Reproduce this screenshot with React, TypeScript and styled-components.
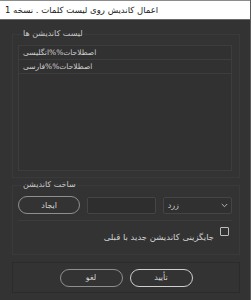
import styled, { createGlobalStyle } from "styled-components";

const GlobalStyle = createGlobalStyle`
  html, body {
    margin: 0;
    padding: 0;
    background: #333333;
  }
  body {
    font-family: "DejaVu Sans", "Noto Sans", sans-serif;
  }
`;

const App = () => {
  return (
    <Window>
      <GlobalStyle />
      <TitleBar>
        <TitleText dir="rtl">اعمال کاندیش روی لیست کلمات . نسخه 1</TitleText>
      </TitleBar>
      <Body>
        <Group>
          <Legend dir="rtl">لیست کاندیشن ها</Legend>
          <ListBox>
            <ListItem dir="rtl">اصطلاحات%%انگلیسی</ListItem>
            <ListItem dir="rtl">اصطلاحات%%فارسی</ListItem>
          </ListBox>
        </Group>

        <Group>
          <Legend dir="rtl">ساخت کاندیشن</Legend>
          <ControlsRow>
            <PillButton $tone="muted">ایجاد</PillButton>
            <TextField />
            <Combo>
              <ComboText dir="rtl">زرد</ComboText>
              <svg width="7" height="5" viewBox="0 0 7 5">
                <path d="M0.8 1 L3.5 3.7 L6.2 1" fill="none" stroke="#b5b5b5" strokeWidth="1" />
              </svg>
            </Combo>
          </ControlsRow>
          <Divider />
          <CheckRow>
            <CheckLabel dir="rtl">جایگزینی کاندیشن جدید با قبلی</CheckLabel>
            <CheckBox />
          </CheckRow>
        </Group>

        <ButtonGroup>
          <PillButton $tone="muted">لغو</PillButton>
          <PillButton $tone="bright">تأیید</PillButton>
        </ButtonGroup>
      </Body>
    </Window>
  );
};

const Window = styled.div`
  width: 250px;
  height: 300px;
  border-right: 1px solid #5c5c5c;
  background: #333333;
  display: flex;
  flex-direction: column;
  overflow: hidden;
`;

const TitleBar = styled.div`
  height: 18px;
  background: #ffffff;
  border-top: 1px solid #8c8c8c;
  border-bottom: 1px solid #6a6a6a;
  display: flex;
  align-items: center;
  padding-left: 5px;
`;

const TitleText = styled.span`
  font-size: 8.5px;
  color: #1a1a1a;
  text-align: left;
`;

const Body = styled.div`
  padding: 8px 10px 0 12px;
  display: flex;
  flex-direction: column;
`;

const Group = styled.fieldset`
  margin: 0;
  padding: 5px 7px 6px 5px;
  border: 1px solid #3a3a3a;
  min-width: 0;
  & + & {
    margin-top: 1px;
  }
`;

const Legend = styled.legend`
  font-size: 8px;
  color: #c9c9c9;
  padding: 0 1px;
  margin-left: 4px;
  line-height: 12px;
`;

const ListBox = styled.div`
  height: 124px;
  background: #313131;
  border: 1px solid #3d3d3d;
  display: flex;
  flex-direction: column;
`;

const ListItem = styled.div`
  height: 13px;
  line-height: 13px;
  font-size: 7.5px;
  color: #cfcfcf;
  padding-left: 4px;
  text-align: left;
  border-bottom: 1px solid #3d3d3d;
`;

const ControlsRow = styled.div`
  display: flex;
  align-items: center;
  gap: 7px;
`;

const PillButton = styled.button<{ $tone: "muted" | "bright" }>`
  width: 63px;
  height: 18px;
  border-radius: 9px;
  background: transparent;
  border: 1.5px solid ${(p) => (p.$tone === "bright" ? "#cfcfcf" : "#8f8f8f")};
  color: #d6d6d6;
  font-family: "DejaVu Sans", sans-serif;
  font-size: 8px;
  padding: 0;
  cursor: pointer;
`;

const TextField = styled.div`
  width: 67px;
  height: 15px;
  background: #2e2e2e;
  border: 1px solid #454545;
  border-radius: 2px;
`;

const Combo = styled.div`
  width: 70px;
  height: 17px;
  background: #303030;
  border: 1px solid #454545;
  border-radius: 2px;
  display: flex;
  align-items: center;
  justify-content: space-between;
  padding: 0 3px 0 4px;
  box-sizing: border-box;
`;

const ComboText = styled.span`
  font-size: 8px;
  color: #cfcfcf;
`;

const Divider = styled.div`
  height: 1px;
  background: #3c3c3c;
  margin: 6px 0 0 0;
`;

const CheckRow = styled.div`
  display: flex;
  justify-content: flex-end;
  align-items: center;
  gap: 6px;
  padding: 6px 3px 6px 0;
`;

const CheckLabel = styled.span`
  font-size: 8.5px;
  color: #d2d2d2;
  margin-top: 5px;
`;

const CheckBox = styled.span`
  width: 7px;
  height: 7px;
  border: 1px solid #bdbdbd;
  border-radius: 1px;
  align-self: flex-start;
`;

const ButtonGroup = styled.div`
  margin-top: 7px;
  height: 29px;
  border: 1px solid #2b2b2b;
  display: flex;
  justify-content: center;
  align-items: center;
  gap: 7px;
`;

export default App;
